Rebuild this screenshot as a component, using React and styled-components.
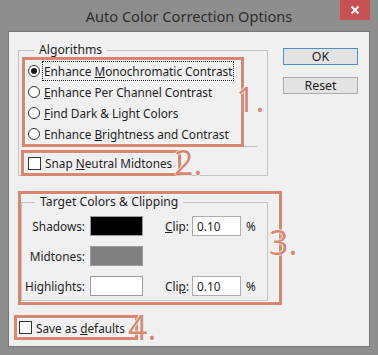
import React from 'react';
import styled, { createGlobalStyle } from 'styled-components';

const Global = createGlobalStyle`
    html, body {
        margin: 0;
        background: #8e8e8e;
    }
    * {
        box-sizing: border-box;
    }
`;

const Window = styled.div`
    width: 378px;
    height: 355px;
    background: #8e8e8e;
    display: flex;
    flex-direction: column;
    font-family: "Noto Sans", "Liberation Sans", sans-serif;
    font-size: 11.8px;
    color: #1e1e1e;
`;

const TitleBar = styled.div`
    position: relative;
    height: 31px;
    display: flex;
    align-items: center;
    justify-content: center;
    font-size: 14.6px;
    color: #2e2e2e;
`;

const Close = styled.div`
    position: absolute;
    top: 0;
    right: 8px;
    width: 30px;
    height: 20px;
    background: #c75050;
    color: #fff;
    display: flex;
    align-items: center;
    justify-content: center;
`;

const Client = styled.div`
    flex: 1;
    margin: 0 8px 8px;
    background: #f0f0f0;
    border: 1px solid #777;
    display: flex;
    padding-left: 5px;
`;

const LeftColumn = styled.div`
    width: 268px;
    display: flex;
    flex-direction: column;
`;

const RightColumn = styled.div`
    margin-left: 1px;
    padding-top: 16px;
    display: flex;
    flex-direction: column;
    gap: 12px;
`;

const Group = styled.fieldset`
    margin: 0;
    padding: 0;
    border: 1px solid #c4c4c4;
    min-width: 0;
`;

const AlgoGroup = styled(Group)`
    margin: 10px 0 0 4px;
    width: 250px;
`;

const TargetGroup = styled(Group)`
    width: 247px;
    margin-bottom: 1px;
    padding: 6px 0 4px 0;
`;

const Legend = styled.legend`
    padding: 0 5px;
    margin-left: ${p => p.$indent}px;
    line-height: 16px;
    font-size: 12.2px;
`;

const Marked = styled.div`
    position: relative;
    z-index: 1;
    border: 3px solid #d9866f;
    box-shadow: 0 0 0 1px rgba(255,255,255,0.6) inset;
`;

const RadioBox = styled(Marked)`
    width: 222px;
    margin: -1px 0 0 3px;
    padding-left: 3px;
`;

const SnapBox = styled(Marked)`
    width: 160px;
    height: 26px;
    margin: 3px 0 -1px 2px;
    padding-left: 4px;
    display: flex;
    align-items: center;
`;

const TargetBox = styled(Marked)`
    z-index: 0;
    margin: 15px 0 0 4px;
    width: 264px;
`;

const SaveBox = styled(Marked)`
    width: 124px;
    height: 25px;
    margin-top: 10px;
    padding-left: 2px;
    display: flex;
    align-items: center;
`;

const Numeral = styled.span`
    position: absolute;
    left: ${p => p.$x}px;
    top: ${p => p.$y}px;
    font-family: "Open Sans", "Noto Sans", sans-serif;
    font-weight: 400;
    font-size: 34px;
    line-height: 34px;
    color: #d9866f;
    text-shadow: 0 0 2px #fff, 0 0 2px #fff, 0 0 1px #fff;
    pointer-events: none;
`;

const Separator = styled.div`
    height: 1px;
    background: #c4c4c4;
    margin: 0 10px 0 3px;
    margin-top: -1px;
`;

const OptionRow = styled.div`
    height: 21px;
    display: flex;
    align-items: center;
    gap: 3px;
`;

const Radio = styled.span`
    width: 12px;
    height: 12px;
    border-radius: 50%;
    border: 1px solid #333;
    background: #fff;
    display: flex;
    align-items: center;
    justify-content: center;
    &::after {
        content: '';
        width: 6px;
        height: 6px;
        border-radius: 50%;
        background: ${p => (p.$checked ? '#111' : 'transparent')};
    }
`;

const Check = styled.span`
    width: 13px;
    height: 13px;
    border: 1px solid #333;
    background: #fff;
    margin-right: 4px;
`;

const OptionText = styled.span`
    padding: 1px 1px;
    outline: ${p => (p.$focus ? '1px dotted #222' : 'none')};
    white-space: nowrap;
`;

const U = styled.span`
    text-decoration: underline;
`;

const ColorRow = styled.div`
    display: flex;
    align-items: center;
    height: 20px;
    margin-bottom: ${p => (p.$last ? 0 : 10)}px;
`;

const RowLabel = styled.span`
    width: 63px;
    text-align: right;
    margin-right: 5px;
    white-space: nowrap;
`;

const Swatch = styled.span`
    width: 53px;
    height: 20px;
    border: 1px solid #9a9a9a;
    background: ${p => p.$color};
`;

const ClipLabel = styled.span`
    margin-left: 22px;
    width: 27px;
`;

const ClipInput = styled.span`
    width: 49px;
    height: 20px;
    border: 1px solid #abadb3;
    background: #fff;
    padding-left: 4px;
    display: flex;
    align-items: center;
`;

const Percent = styled.span`
    margin-left: 5px;
`;

const Button = styled.div`
    width: 75px;
    height: 17px;
    border: 1px solid ${p => (p.$default ? '#4a90d0' : '#acacac')};
    background: #e3e3e3;
    display: flex;
    align-items: center;
    justify-content: center;
    font-size: 12.4px;
`;

const ColorLine = ({ label, color, clip, underline, last }) => (
    <ColorRow $last={last}>
        <RowLabel>{label}</RowLabel>
        <Swatch $color={color} />
        {clip && (
            <>
                <ClipLabel>{underline === 0 ? <><U>C</U>lip:</> : <>Cli<U>p</U>:</>}</ClipLabel>
                <ClipInput>0.10</ClipInput>
                <Percent>%</Percent>
            </>
        )}
    </ColorRow>
);

export default function App() {
    return (
        <Window>
            <Global />
            <TitleBar>
                Auto Color Correction Options
                <Close>
                    <svg width="10" height="10" viewBox="0 0 10 10">
                        <path d="M1.5 1.5 L8.5 8.5 M8.5 1.5 L1.5 8.5" stroke="#fff" strokeWidth="2" />
                    </svg>
                </Close>
            </TitleBar>
            <Client>
                <LeftColumn>
                    <AlgoGroup>
                        <Legend $indent={15}>Algorithms</Legend>
                        <RadioBox>
                            <OptionRow>
                                <Radio $checked />
                                <OptionText $focus>Enhance <U>M</U>onochromatic Contrast</OptionText>
                            </OptionRow>
                            <OptionRow>
                                <Radio />
                                <OptionText><U>E</U>nhance Per Channel Contrast</OptionText>
                            </OptionRow>
                            <OptionRow>
                                <Radio />
                                <OptionText><U>F</U>ind Dark &amp; Light Colors</OptionText>
                            </OptionRow>
                            <OptionRow>
                                <Radio />
                                <OptionText>Enhance <U>B</U>rightness and Contrast</OptionText>
                            </OptionRow>
                            <Numeral $x={211} $y={22}>1.</Numeral>
                        </RadioBox>
                        <Separator />
                        <SnapBox>
                            <Check />
                            <span>Snap <U>N</U>eutral Midtones</span>
                            <Numeral $x={150} $y={-8}>2.</Numeral>
                        </SnapBox>
                    </AlgoGroup>
                    <TargetBox>
                        <TargetGroup>
                            <Legend $indent={13}>Target Colors &amp; Clipping</Legend>
                            <ColorLine label="Shadows:" color="#000" clip underline={0} />
                            <ColorLine label="Midtones:" color="#808080" />
                            <ColorLine label="Highlights:" color="#fff" clip underline={3} last />
                        </TargetGroup>
                        <Numeral $x={248} $y={31}>3.</Numeral>
                    </TargetBox>
                    <SaveBox>
                        <Check />
                        <span>Save as <U>d</U>efaults</span>
                        <Numeral $x={111} $y={-8}>4.</Numeral>
                    </SaveBox>
                </LeftColumn>
                <RightColumn>
                    <Button $default>OK</Button>
                    <Button>Reset</Button>
                </RightColumn>
            </Client>
        </Window>
    );
}
